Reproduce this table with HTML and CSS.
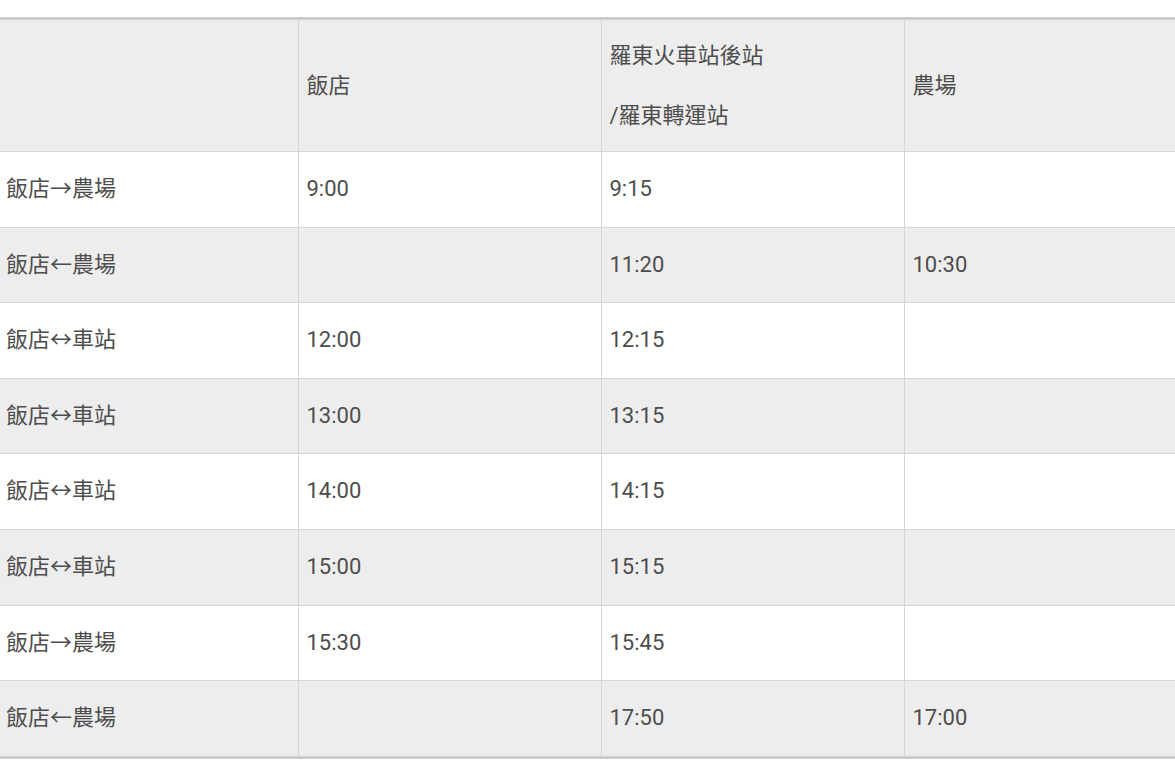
FILE: index.html
```html
<!DOCTYPE html>
<html lang="zh-Hant">
<head>
<meta charset="utf-8">
<title>接駁時刻表</title>
<link rel="stylesheet" href="styles.css">
</head>
<body>
<div class="wrap">
<table class="schedule">
  <colgroup>
    <col class="c1"><col class="c2"><col class="c3"><col class="c4">
  </colgroup>
  <thead>
    <tr>
      <th></th>
      <th>飯店</th>
      <th><div class="two"><span>羅東火車站後站</span><span>/羅東轉運站</span></div></th>
      <th>農場</th>
    </tr>
  </thead>
  <tbody>
    <tr><td>飯店→農場</td><td>9:00</td><td>9:15</td><td></td></tr>
    <tr><td>飯店←農場</td><td></td><td>11:20</td><td>10:30</td></tr>
    <tr><td>飯店↔車站</td><td>12:00</td><td>12:15</td><td></td></tr>
    <tr><td>飯店↔車站</td><td>13:00</td><td>13:15</td><td></td></tr>
    <tr><td>飯店↔車站</td><td>14:00</td><td>14:15</td><td></td></tr>
    <tr><td>飯店↔車站</td><td>15:00</td><td>15:15</td><td></td></tr>
    <tr><td>飯店→農場</td><td>15:30</td><td>15:45</td><td></td></tr>
    <tr><td>飯店←農場</td><td></td><td>17:50</td><td>17:00</td></tr>
  </tbody>
</table>
</div>
</body>
</html>
```

FILE: styles.css
```css
html, body {
  margin: 0;
  padding: 0;
  background: #ffffff;
}
.wrap {
  padding-top: 17px;
}
.schedule {
  width: 1175px;
  table-layout: fixed;
  border-collapse: collapse;
  font-family: Roboto, "Noto Sans CJK TC", sans-serif;
  font-size: 22px;
  color: #4d4d4d;
  border-top: 3px solid #cccccc;
  border-bottom: 3px solid #cccccc;
}
.c1 { width: 298px; }
.c2 { width: 303px; }
.c3 { width: 303px; }
.c4 { width: 271px; }
.schedule th,
.schedule td {
  text-align: left;
  font-weight: normal;
  vertical-align: middle;
  border-left: 1px solid #d6d6d6;
  border-top: 1px solid #d6d6d6;
  padding: 20px 8px;
  line-height: 34.6px;
}
.schedule th:first-child,
.schedule td:first-child {
  border-left: none;
  padding-left: 6px;
}
.schedule thead th {
  background: #ededed;
  padding-top: 21px;
  padding-bottom: 20px;
  line-height: 30px;
}
.two {
  display: flex;
  flex-direction: column;
  gap: 30px;
}
.schedule tbody tr:nth-child(even) td {
  background: #ededed;
}
.schedule tbody tr:nth-child(odd) td {
  background: #ffffff;
}
```
